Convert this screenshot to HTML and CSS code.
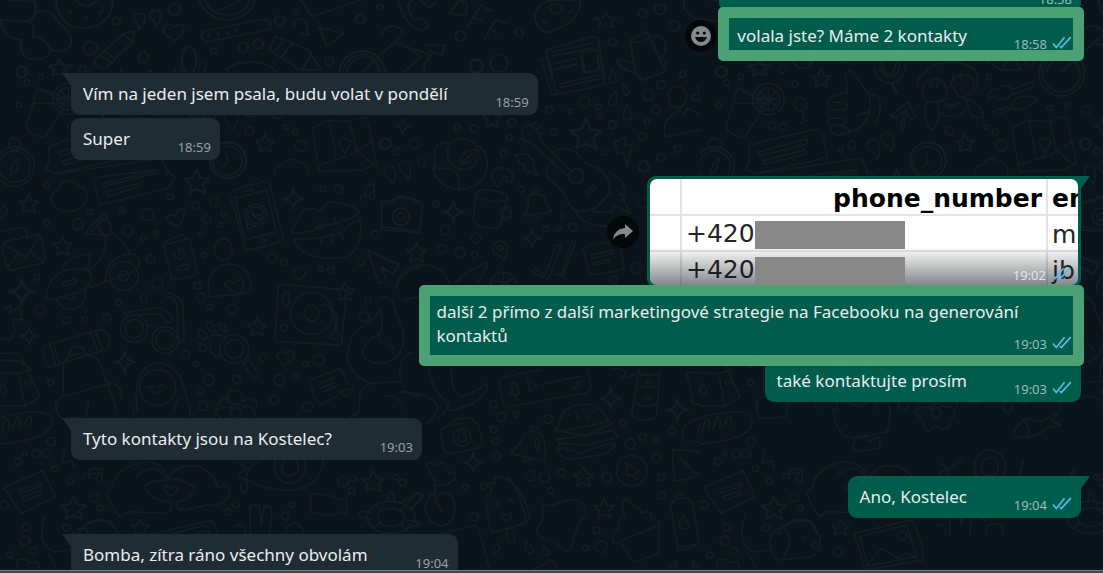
FILE: index.html
```html
<!DOCTYPE html>
<html lang="cs">
<head>
  <meta charset="UTF-8">
  <meta name="viewport" content="width=device-width, initial-scale=1.0">
  <title>Chat</title>
  <link rel="stylesheet" href="styles.css">
</head>
<body>
  <svg width="0" height="0" class="defs" aria-hidden="true">
    <symbol id="ticks" viewBox="0 0 20 13">
      <path d="M1 7.5 4.3 11.5 12.5 1.2M7.8 10 9.3 11.5 18.8 1.2" fill="none" stroke="#53bdeb" stroke-width="1.7"/>
    </symbol>
    <symbol id="star" viewBox="-16 -16 32 32" overflow="visible">
      <path d="M0-13 4-4 13-3 6 3 9 12 0 8-8 12-6 3-13-3-4-4Z"/>
    </symbol>
    <symbol id="spark" viewBox="-16 -16 32 32" overflow="visible">
      <path d="M0-11Q1-1 11 0 1 1 0 11-1 1-11 0-1-1 0-11Z"/>
    </symbol>
  </svg>

  <main class="chat">
    <!-- wallpaper -->
    <svg class="wallpaper" width="100%" height="100%" aria-hidden="true">
      <defs>
        <pattern id="doodles" width="700" height="573" patternUnits="userSpaceOnUse">
          <!-- top strip -->
          <g transform="scale(.459 .3333)">
            <path d="M0 60 60 64Q78 70 72 110 98 110 110 150 108 180 70 178 40 170 46 118 10 120 0 62M20 0 76 4Q85 50 60 64M76 38Q110 20 130 70 165 110 152 140 140 160 110 150"/>
            <path d="M122 0Q125 60 160 80 180 92 205 78 245 60 246 0M165 0Q185 35 212 0M182 50l10 6M150 30l6 12M225 30l-10 12"/>
            <path d="M205 180 270 100 292 92 290 125 230 205Q205 205 205 180M216 165 244 190M226 152 252 178M268 102 288 124"/>
            <path d="M292 60a12 16 0 1 1 24-8Q316 80 300 90 306 74 292 60M326 50a12 16 0 1 1 24-8Q350 75 336 82 342 66 326 50M380 122Q350 100 358 80 370 66 378 80 392 66 400 80 404 100 380 122"/>
            <path d="M434 0Q450 60 500 60 550 48 555 0M446 0Q460 46 500 46 540 36 544 0M480 30 525 0M442 94 578 56Q596 68 586 88L450 126Q432 116 442 94M455 100v10M475 97v10M495 93v10M515 88v10"/>
            <path d="M655 0 680 50 788 0M642 80a14 16 0 1 1 26-4L672 108 654 98M695 82 750 100 712 138ZM600 108 672 150 698 208 655 210 586 150ZM620 115 600 150M640 126 612 172M678 158 660 206"/>
            <path d="M740 215Q745 160 790 155 830 155 840 215M755 215Q765 175 790 170 820 175 825 215M860 125 790 215M872 130 918 170 880 215M834 100Q838 80 850 78 885 80 874 110L858 128M924 135 970 135 962 165 930 150M940 165 925 190 924 215M858 128 940 165M868 0Q880 80 920 92L935 78 920 55 905 58Q888 40 890 10L900 0M915 0 935 24 952 5"/>
            <path d="M980 40 1000 0Q1022 5 1015 25 1025 55 980 40M1020 78 1048 15 1072 35M1032 52 1050 62M1056 118 1080 58 1104 72M1068 88 1084 98"/>
            <path d="M1165 45Q1172 0 1215 0L1265 0Q1265 70 1190 98 1168 90 1165 45M1195 20Q1210 0 1225 20 1225 42 1205 40ZM1180 60l10 8M1240 40l8-10"/>
            <path d="M1190 150 1290 110Q1304 110 1305 125L1315 240M1190 150 1202 240M1205 155 1290 130M1205 168 1292 144M1210 190 1255 176M1210 208 1256 194M1266 160 1300 150 1306 210 1275 220ZM1176 180 1192 175"/>
            <path d="M1372 120 1410 95 1450 215 1400 240 1385 215ZM1375 125Q1395 135 1415 112M1418 110Q1440 100 1450 130 1452 165 1436 178M1385 215Q1345 215 1345 178L1378 190M1490 0Q1490 50 1525 60"/>
            <use href="#star" x="98" y="168" width="64" height="70"/><use href="#star" x="1290" y="25" width="60" height="70"/>
            <ellipse cx="380" cy="28" rx="13" ry="17"/><ellipse cx="254" cy="63" rx="8" ry="11"/><ellipse cx="196" cy="145" rx="15" ry="20"/><ellipse cx="312" cy="172" rx="11" ry="16"/><ellipse cx="610" cy="62" rx="11" ry="15"/><ellipse cx="530" cy="142" rx="11" ry="15"/><ellipse cx="563" cy="132" rx="10" ry="14"/><ellipse cx="785" cy="58" rx="10" ry="13"/><ellipse cx="828" cy="22" rx="7" ry="9"/><ellipse cx="1003" cy="108" rx="11" ry="15"/><ellipse cx="1131" cy="98" rx="9" ry="12"/><ellipse cx="1038" cy="200" rx="13" ry="22"/><ellipse cx="1087" cy="190" rx="19" ry="26"/><ellipse cx="1400" cy="40" rx="9" ry="13"/><ellipse cx="1438" cy="28" rx="12" ry="16"/><ellipse cx="1335" cy="125" rx="8" ry="11"/><ellipse cx="1470" cy="78" rx="11" ry="15"/><ellipse cx="48" cy="215" rx="12" ry="16"/><ellipse cx="412" cy="180" rx="16" ry="42"/><ellipse cx="718" cy="185" rx="9" ry="13"/><ellipse cx="465" cy="153" rx="7" ry="9"/><ellipse cx="645" cy="35" rx="6" ry="8"/>
          </g>
          <!-- drink, thumb, map -->
          <g transform="translate(-4 55) scale(.3333)">
            <path d="M125 98 90 215Q98 240 145 248L210 148ZM115 145 210 145M125 98 210 130"/>
            <circle cx="217" cy="132" r="47"/><circle cx="217" cy="132" r="34"/><path d="M217 98v68M183 132h68M193 108l48 48M241 108l-48 48"/>
            <path d="M455 110 448 60Q465 35 480 65L520 120Q535 190 480 225L430 240Q400 240 402 212 390 205 400 190 390 175 400 160 385 130 420 122ZM410 142h35q18 10 0 22h-42M402 190h38q20 10 0 20h-34M440 215q20 0 18 20M520 122Q555 115 552 150 555 195 532 202M485 180 522 168"/>
            <path d="M535 40Q540 80 585 85 630 75 630 20M552 35Q560 65 585 65 612 60 612 20M585 85 602 118M590 85 605 115M612 225 626 165 600 190 583 182 635 140 658 185 645 195 632 170 622 225Z"/>
            <path d="M690 45Q720 20 760 22 815 20 840 50 850 80 838 110M665 95Q665 60 695 50M680 95Q700 70 725 70 760 85 750 130 710 155 680 125ZM765 90Q770 60 795 60 835 60 835 95 820 130 790 125ZM700 100 710 78M720 100 728 78M780 85 770 62M800 80 790 58M690 145Q715 135 725 145 735 200 710 222 680 215 690 145M808 130Q860 145 862 185 845 195 825 180ZM730 172Q770 200 810 165M748 145Q768 155 790 142 770 170 748 150"/>
            <circle cx="1097" cy="55" r="68"/><circle cx="1097" cy="55" r="56"/><path d="M1100 50 1135 15M875 130Q880 100 905 102 930 80 948 105L1010 80Q1015 92 1008 98L945 118Q925 145 900 125ZM890 170 950 150Q960 120 985 125 1010 120 1025 135L990 158Q970 170 950 160L895 180Z"/>
            <path d="M948 222 995 195 1050 200 1112 185 1142 325 1100 345 970 350ZM1000 200 1020 300M1062 203 1085 300M970 330 1060 300 1130 260M1090 292 1130 330" stroke-dasharray="40 8"/><path d="M1047 295 1030 265Q1030 250 1047 250 1064 252 1064 265Z"/>
            <path d="M158 275Q165 265 350 225 372 222 378 235L395 305Q350 320 180 355L150 345 162 312ZM185 292 330 252Q340 260 330 268L195 302ZM200 318 325 285Q338 290 328 298L205 328ZM195 355 490 310Q510 318 512 360"/>
            <path d="M520 285a18 18 0 1 1 28-8Q558 300 540 312 546 300 520 285M562 265a18 18 0 1 1 28-8Q600 280 582 292 590 280 562 265"/>
            <circle cx="695" cy="317" r="54"/><circle cx="695" cy="317" r="43"/><path d="M688 290 698 318 680 338M835 360Q835 330 860 330 880 300 905 320 940 320 935 360"/>
            <circle cx="56" cy="335" r="59"/><circle cx="56" cy="335" r="47"/><circle cx="56" cy="267" r="18"/><path d="M70 308 62 345 42 362 50 328Z"/>
            <circle cx="314" cy="148" r="19"/><path d="M318 168 326 198M312 205 340 195"/>
            <use href="#star" x="155" y="5" width="65" height="65"/><use href="#star" x="340" y="35" width="70" height="70"/><use href="#star" x="772" y="230" width="70" height="70"/>
            <circle cx="75" cy="52" r="15"/><circle cx="93" cy="83" r="9"/><circle cx="134" cy="65" r="8"/><circle cx="260" cy="43" r="11"/><circle cx="297" cy="87" r="9"/><circle cx="228" cy="212" r="12"/><circle cx="262" cy="215" r="11"/><circle cx="68" cy="150" r="8"/><circle cx="468" cy="270" r="12"/><circle cx="433" cy="285" r="7"/><circle cx="761" cy="228" r="13"/><circle cx="898" cy="232" r="9"/><circle cx="870" cy="216" r="7"/><circle cx="915" cy="272" r="17"/><circle cx="1170" cy="166" r="12"/><circle cx="1114" cy="152" r="7"/><circle cx="1061" cy="160" r="7"/><circle cx="1166" cy="267" r="16"/><circle cx="880" cy="67" r="8"/>
          </g>
          <!-- scooter, phone, lips -->
          <g transform="translate(0 170) scale(.3333)">
            <path d="M155 95Q150 65 175 62 175 35 205 33 225 30 232 48 262 50 260 80 255 120 205 125 165 125 155 95"/>
            <path d="M0 185 65 172 80 185V200M5 230 15 215 110 195Q122 195 125 205L135 265 125 280 35 300Q25 300 20 290ZM12 222 75 262 118 200M55 250 22 292M90 245 130 275"/>
            <path d="M137 380Q150 300 220 298 270 290 275 320 280 350 230 368L150 390Q138 388 137 380M185 298Q210 250 270 255 270 290 250 300M265 300Q320 270 318 195L258 192Q260 180 315 128 325 130 320 142L275 185M335 185Q385 230 388 252 320 260 315 335L388 310Q420 300 418 275 415 250 388 252M270 352 315 335M188 340 225 325Q235 335 225 340L190 348Z"/>
            <ellipse cx="314" cy="170" rx="18" ry="28" transform="rotate(-30 314 170)"/><circle cx="371" cy="318" r="43"/><circle cx="371" cy="318" r="15"/><path d="M170 388Q180 418 215 418 258 410 256 358M195 380Q215 400 228 372"/>
            <path d="M490 225 570 205 592 310Q590 318 515 330ZM498 215 545 193 558 205M525 245Q515 262 540 268 560 262 550 240L538 238V252M528 292 565 282Q572 290 566 295L532 304Z"/>
            <path d="M688 70Q690 60 790 35 805 35 810 45L850 205Q845 220 750 240 738 238 735 230ZM705 85 800 60 830 185 735 210ZM735 65 760 58"/><circle cx="768" cy="135" r="33"/><circle cx="768" cy="135" r="24"/><circle cx="790" cy="212" r="7"/><path d="M757 122Q752 140 780 148L785 140 775 132 768 138 760 130M742 150V178L765 168"/>
            <path d="M872 190Q895 140 910 120 940 110 962 125 980 90 1010 98 1070 110 1080 125 1060 150 980 165 940 190 872 190M880 205Q950 215 1030 185 1060 150 1080 150 1090 220 1050 255 1000 275 930 255 885 235 880 205M945 180Q965 155 985 165L1020 158M960 222 968 205M995 220V205M1030 208 1022 195M955 158 965 172M1005 142V160"/>
            <path d="M630 380Q615 320 650 295 690 270 730 295 760 325 750 365 730 370 715 375 675 350 675 340 685 325 702 340 715 320 732 335 732 360 708 378L690 375Z"/><ellipse cx="670" cy="238" rx="27" ry="32"/>
            <path d="M1103 242 1197 282 1180 312 1145 290 1158 330 1138 340ZM835 350Q838 343 850 343L1040 360 1025 520 1015 525 832 515 825 505ZM965 408Q980 395 990 415L1012 438V485M1005 430V485"/><circle cx="935" cy="430" r="63"/><circle cx="935" cy="430" r="23"/><circle cx="1006" cy="495" r="12"/><ellipse cx="858" cy="388" rx="10" ry="22"/><circle cx="852" cy="473" r="10"/>
            <path d="M370 430 470 412Q500 415 518 445 515 460 500 458L480 430 385 438ZM500 368Q545 375 550 410L552 510 540 520 530 500M498 380Q530 380 532 415V485M440 465 470 470"/><circle cx="402" cy="476" r="41"/><circle cx="402" cy="476" r="28"/><circle cx="496" cy="510" r="40"/><circle cx="496" cy="510" r="28"/>
            <circle cx="703" cy="537" r="43"/><circle cx="703" cy="537" r="28"/><path d="M730 580 745 568 775 610Q775 625 758 625ZM630 500Q655 490 678 500M630 500Q620 560 662 560M595 480Q618 480 620 505 600 520 595 480M620 460Q640 450 645 485 625 490 620 460M655 460Q680 460 680 485 662 490 655 460M595 520Q625 520 618 545 595 550 595 520"/>
            <path d="M130 540Q128 530 140 525L295 480Q320 475 330 510 330 530 318 538L150 592Q138 592 130 540M150 525 168 588M160 522 180 584M272 488 295 545M285 484 308 540M190 680V590Q190 555 235 552 285 550 300 580L350 720M190 680 330 640Q365 640 365 690M170 720 175 690 190 680M208 560Q208 530 232 528 258 532 256 552"/>
            <path d="M0 550H60L120 680 75 708H0M0 570 62 575 95 600 55 610H0M55 610 75 708M75 635 98 625 98 635 78 645ZM8 640Q-5 660 10 675 30 668 8 640M10 418 32 405 30 430 58 410 68 450 40 448 45 480 30 510 0 505"/>
            <path d="M412 720Q405 660 412 640 430 580 480 578 530 585 548 640L570 720M410 720V705M525 720Q525 680 550 685"/><circle cx="473" cy="653" r="54"/><path d="M442 655Q450 645 460 652M478 648Q488 640 494 650M455 662Q470 680 482 662M650 715Q670 665 690 700 670 660 705 662 735 668 725 695 775 670 770 715"/>
            <path d="M928 630 1020 595Q1030 600 1040 640M928 630 945 690 968 705 980 695 1010 680M960 640 1002 622M963 655 1005 638M968 666 1008 650M1018 665 1062 655 1040 680ZM850 585Q825 560 835 548 850 540 858 555 870 535 882 550 890 570 850 585M535 170Q495 155 500 140 520 130 525 140 530 115 550 118 562 140 535 170"/>
            <path d="M1145 380Q1180 380 1185 420L1210 480Q1220 580 1130 580 1080 570 1090 540 1110 500 1140 490 1155 445 1140 420 1120 450 1060 490 1040 540 1042 570 1060 620 1110 640L1202 635M1140 490Q1130 510 1150 520 1170 520 1182 540M1190 350Q1200 310 1260 290M1210 390 1260 378M1080 720Q1070 640 1120 640M1202 635Q1190 560 1240 545M1210 660Q1240 680 1260 680M1150 680Q1200 670 1210 720M1285 18"/>
            <path d="M280 30Q275 20 470 0M280 30 300 105 500 55 525 22 500 0M308 42 470 0M310 50 475 8M320 65 420 40Q430 45 420 50L325 78ZM1145 95 1185 88 1195 78 1230 82 1260 95M1145 95V180L1260 188"/><circle cx="1202" cy="140" r="25"/><circle cx="1202" cy="140" r="11"/><circle cx="686" cy="-30" r="54"/><path d="M1090 92a8 8 0 1 1 8-8V48L1122 40V75a8 8 0 1 1-8-5M5 108Q30 115 20 130L0 145M0 115 8 122"/>
            <use href="#star" x="50" y="65" width="72" height="72"/><use href="#star" x="152" y="192" width="72" height="72"/><use href="#star" x="545" y="-10" width="90" height="90"/><use href="#star" x="1000" y="330" width="70" height="70"/><use href="#star" x="735" y="435" width="72" height="72"/><use href="#spark" x="10" y="310" width="110" height="110"/><use href="#spark" x="48" y="458" width="80" height="80"/><use href="#spark" x="328" y="530" width="92" height="92"/><use href="#spark" x="835" y="42" width="90" height="90"/>
            <circle cx="233" cy="163" r="17"/><circle cx="271" cy="125" r="8"/><circle cx="367" cy="121" r="8"/><circle cx="442" cy="134" r="18"/><circle cx="382" cy="182" r="16"/><circle cx="430" cy="204" r="8"/><circle cx="468" cy="191" r="7"/><circle cx="512" cy="80" r="9"/><circle cx="588" cy="106" r="12"/><circle cx="643" cy="96" r="13"/><circle cx="621" cy="148" r="12"/><circle cx="671" cy="132" r="8"/><circle cx="661" cy="164" r="7"/><circle cx="602" cy="192" r="7"/><circle cx="612" cy="255" r="8"/><circle cx="451" cy="268" r="13"/><circle cx="472" cy="339" r="16"/><circle cx="592" cy="348" r="10"/><circle cx="603" cy="382" r="13"/><circle cx="631" cy="412" r="8"/><circle cx="696" cy="417" r="14"/><circle cx="816" cy="264" r="14"/><circle cx="852" cy="277" r="10"/><circle cx="898" cy="310" r="17"/><circle cx="961" cy="296" r="8"/><circle cx="993" cy="301" r="10"/><circle cx="1016" cy="57" r="13"/><circle cx="969" cy="56" r="9"/><circle cx="1125" cy="194" r="11"/><circle cx="1084" cy="276" r="10"/><circle cx="1104" cy="394" r="9"/><circle cx="1093" cy="440" r="14"/><circle cx="120" cy="420" r="16"/><circle cx="110" cy="322" r="9"/><circle cx="140" cy="158" r="8"/><circle cx="140" cy="45" r="8"/><circle cx="320" cy="445" r="13"/><circle cx="255" cy="448" r="9"/><circle cx="200" cy="451" r="10"/><circle cx="431" cy="386" r="10"/><circle cx="356" cy="397" r="9"/><circle cx="557" cy="554" r="12"/><circle cx="587" cy="582" r="8"/><circle cx="627" cy="631" r="16"/><circle cx="710" cy="628" r="12"/><circle cx="789" cy="561" r="11"/><circle cx="837" cy="631" r="16"/><circle cx="956" cy="570" r="16"/><circle cx="917" cy="582" r="8"/><circle cx="823" cy="690" r="13"/><circle cx="600" cy="661" r="9"/><circle cx="152" cy="637" r="9"/><circle cx="887" cy="619" r="9"/>
          </g>
          <!-- newspaper, drops, person -->
          <g transform="translate(420 60) scale(.3333)">
            <path d="M365 0 395 105Q540 80 555 70L545 0M388 0 408 98M400 30 470 12M418 72 540 45 542 55 422 82ZM485 0 490 38 535 30 535 0M590 5Q620 30 650 45L665 62 735 35 738 0M580 30Q565 50 568 65 585 75 590 60ZM610 68Q605 90 615 105 635 105 625 90ZM588 92Q565 115 566 130 580 145 590 132ZM622 135Q605 160 612 178 635 185 637 165ZM735 230Q725 180 765 160L778 150 795 165 800 145Q850 160 860 200L850 208ZM840 78 850 100 872 95 875 108 852 115 855 138 842 140 838 118 818 122 815 108 838 103 832 82Z"/>
            <ellipse cx="772" cy="111" rx="28" ry="32"/><circle cx="493" cy="126" r="16"/><circle cx="685" cy="104" r="17"/><circle cx="723" cy="74" r="12"/><circle cx="708" cy="148" r="13"/><circle cx="578" cy="195" r="12"/><circle cx="535" cy="140" r="8"/><circle cx="540" cy="167" r="8"/><circle cx="682" cy="186" r="8"/><circle cx="668" cy="230" r="11"/><circle cx="722" cy="293" r="12"/><circle cx="773" cy="267" r="10"/><circle cx="388" cy="149" r="10"/><circle cx="450" cy="154" r="7"/><circle cx="401" cy="216" r="10"/><circle cx="275" cy="188" r="12"/><circle cx="671" cy="320" r="17"/><circle cx="788" cy="43" r="9"/><circle cx="170" cy="18" r="19"/>
          </g>
          <!-- guitar, mug, bell -->
          <g transform="translate(380 110) scale(.3333)">
            <path d="M445 42Q480 60 482 92L578 185M465 108 565 200M445 42Q420 55 427 85L465 108M455 45 468 38M470 58 482 50M478 72 492 66M425 85 415 95M435 95 428 105M530 120Q570 105 595 135 610 160 650 172 690 195 688 240 670 300 600 305 570 300 560 265 540 230 505 205 490 175 520 150M618 245 640 225Q650 230 645 236L625 255ZM585 305Q610 350 680 348M690 190Q735 200 738 260L720 250 752 310 700 285 698 305 640 305 690 245"/><circle cx="589" cy="198" r="22"/>
            <path d="M165 175V115Q175 95 205 98M298 108Q325 135 322 170 310 235 240 238 180 240 158 175 190 170 225 185 245 210 235 235M240 162Q240 120 288 120 285 160 240 162M245 158 280 128"/><circle cx="249" cy="132" r="47"/>
            <path d="M290 248 280 325Q285 355 335 355 360 355 362 340L382 262M362 295Q395 280 395 315 390 335 362 328"/><ellipse cx="335" cy="257" rx="48" ry="16" transform="rotate(8 335 257)"/><circle cx="376" cy="310" r="13"/>
            <path d="M432 318Q448 295 445 262 465 240 492 260 495 285 517 305ZM458 245a9 9 0 1 1 18-2M465 320Q475 330 485 317M336 200Q330 175 370 172 400 180 400 205 395 220 380 215 385 200 370 200 365 220 350 232ZM405 135 440 130 466 160 458 165 472 198 430 178 436 166 422 162ZM705 95 738 80 735 105 757 105 742 168 730 130 710 130Z"/>
            <path d="M15 195a17 17 0 1 1 30-5Q48 215 35 225 40 210 15 195M60 180a17 17 0 1 1 30-5Q94 200 80 210 86 196 60 180M5 280 45 275 55 262 98 268 128 285 118 365 5 350Z"/><circle cx="63" cy="320" r="26"/><circle cx="63" cy="320" r="11"/>
            <path d="M375 450 340 425Q335 395 362 393 385 400 383 420ZM455 485 465 475 495 495 530 405 543 408 505 510ZM525 490 545 495 575 395 587 398 548 500ZM610 415Q612 408 710 392 720 395 732 472 725 485 628 495ZM632 435 700 420 702 430 635 445ZM640 458 690 448 690 456 642 466ZM50 540Q50 465 135 463 200 468 215 540M0 440 57 465 40 492 0 475M225 520Q260 480 320 458 325 470 290 520M330 540Q330 490 370 486 410 490 415 540M370 486V540M340 510 405 530M400 505 340 535"/><circle cx="362" cy="414" r="8"/>
            <use href="#star" x="560" y="15" width="115" height="115"/><use href="#star" x="302" y="-10" width="70" height="70"/><use href="#star" x="72" y="390" width="75" height="75"/><use href="#spark" x="32" y="12" width="72" height="72"/><use href="#spark" x="175" y="260" width="92" height="92"/><use href="#spark" x="415" y="345" width="82" height="82"/>
            <circle cx="18" cy="101" r="16"/><circle cx="103" cy="101" r="15"/><circle cx="51" cy="124" r="10"/><circle cx="126" cy="157" r="12"/><circle cx="232" cy="53" r="9"/><circle cx="283" cy="56" r="11"/><circle cx="396" cy="38" r="12"/><circle cx="388" cy="83" r="9"/><circle cx="371" cy="131" r="9"/><circle cx="423" cy="238" r="10"/><circle cx="195" cy="360" r="14"/><circle cx="287" cy="384" r="15"/><circle cx="186" cy="417" r="13"/><circle cx="240" cy="428" r="16"/><circle cx="284" cy="435" r="9"/><circle cx="578" cy="352" r="12"/><circle cx="536" cy="356" r="7"/><circle cx="499" cy="356" r="8"/><circle cx="549" cy="318" r="8"/><circle cx="697" cy="44" r="12"/><circle cx="675" cy="127" r="9"/><circle cx="790" cy="168" r="15"/><circle cx="788" cy="278" r="15"/><circle cx="769" cy="475" r="17"/><circle cx="699" cy="510" r="12"/><circle cx="167" cy="282" r="9"/>
          </g>
          <!-- burger, ice lolly, cupcake -->
          <g transform="translate(400 360) scale(.3333)">
            <path d="M475 200Q480 135 560 132 610 140 625 185L480 215 465 210ZM480 215 560 225 640 190 622 182M468 240 640 212 655 232 560 255 480 250ZM480 250 470 268 490 262 505 275 520 268 540 282 590 262 640 250 650 262M472 268Q480 298 520 297L600 285Q640 275 642 252M510 160l-5 8M530 175l4-8M548 150l6 8M580 150l6 8M562 175l6-4"/>
            <path d="M297 60Q300 50 420 30M297 60 310 130Q315 142 330 140L560 98Q575 92 573 80L562 20M335 72Q342 62 350 72L355 98Q345 108 338 98ZM328 95Q345 120 362 95M348 112 352 120M382 60 412 78 390 95ZM430 72 543 48M512 80 520 90 535 65M525 85 532 88 546 65M635 25Q700 25 660 60L725 35M720 20 695 160Q700 180 730 180 768 180 770 165L780 20M722 45H775M715 82H772M706 130Q740 145 770 130M740 75V65H755V75M735 120V110H750V120"/>
            <path d="M860 38 950 35 975 125 965 135 880 132ZM950 35 990 20 1015 95 975 125M970 65 995 52V60L972 78ZM908 65Q890 85 900 105 925 108 908 65M850 235Q835 190 900 175L990 155 1020 155M850 235Q860 255 1020 240M895 210 905 170Q920 168 915 205M935 200 945 165Q958 165 955 195M972 190 985 158"/>
            <path d="M122 215Q120 205 155 195L165 178 210 172 222 185Q240 190 247 255 240 268 145 280 135 278 130 265ZM165 195 190 188"/><circle cx="186" cy="233" r="26"/><circle cx="186" cy="233" r="12"/>
            <path d="M333 280Q370 240 372 220 395 205 425 225 438 240 435 305ZM395 210a10 10 0 1 1 20 0M368 295Q378 312 395 300M405 238 418 235Q420 260 408 270Z"/><circle cx="695" cy="332" r="46"/><path d="M680 310 717 335 705 340 715 355 705 360 695 345 680 348ZM818 268 870 272Q925 280 910 310 900 360 825 362 815 320 818 268M838 290 908 362M850 325 870 318M845 305 865 310M905 378 940 440 960 458 1020 440M905 378 1020 335"/>
            <path d="M102 355Q75 320 80 310 95 305 105 318 115 310 130 308 150 330 143 340 170 335 168 350 150 380 105 375ZM105 375V420L125 455M100 400Q70 420 78 460 95 500 125 498 165 490 165 440 160 395 125 400 110 405 105 420M285 350Q360 350 390 470 395 490 280 517 265 510 258 410L275 398 268 370 285 368ZM320 352Q350 360 380 490M285 425 298 430 285 440M335 412 325 420 340 426M302 462Q330 468 335 455 338 480 320 482 308 478 302 462M318 515 325 545Q340 558 345 540L340 508"/>
            <path d="M425 430Q450 445 495 422 560 410 558 465 530 490 520 540 510 585 490 570 470 540 430 535 400 520 415 500 440 470 425 430M640 550Q635 515 655 505 650 480 675 465 655 440 680 412L700 440Q730 445 720 460 760 445 752 475 780 475 778 495L645 550ZM665 550 695 600 712 605 775 580 778 495M812 435Q820 415 850 412 880 420 880 440L897 550Q870 570 835 572L812 435M825 415a12 12 0 1 1 28 0M850 468Q830 490 842 505 875 512 865 490ZM838 562 892 552M0 430 45 400Q65 395 70 410L30 450M20 480 60 490Q60 500 20 500M120 520 225 497Q240 500 268 630M290 550Q275 570 285 580 300 575 300 560ZM380 545Q370 570 385 580 400 580 402 570ZM428 558Q425 580 440 588 450 580 445 572ZM400 630 455 600Q470 610 470 630M805 630 828 598V630M880 630V600L900 630"/>
            <path d="M0 95Q110 100 115 150 105 165 80 192M80 0Q90 90 145 130 140 160 120 170M155 20Q150 90 180 110 225 100 265 68 260 130 150 152"/>
            <use href="#spark" x="585" y="68" width="95" height="95"/><use href="#spark" x="785" y="102" width="95" height="95"/><use href="#spark" x="177" y="262" width="85" height="92"/><use href="#star" x="512" y="312" width="76" height="76"/><use href="#star" x="575" y="408" width="74" height="74"/>
            <circle cx="303" cy="171" r="14"/><circle cx="348" cy="163" r="8"/><circle cx="280" cy="133" r="11"/><circle cx="281" cy="210" r="9"/><circle cx="287" cy="243" r="10"/><circle cx="289" cy="289" r="12"/><circle cx="445" cy="178" r="13"/><circle cx="391" cy="348" r="14"/><circle cx="434" cy="351" r="16"/><circle cx="484" cy="338" r="11"/><circle cx="453" cy="392" r="9"/><circle cx="620" cy="351" r="15"/><circle cx="690" cy="252" r="15"/><circle cx="669" cy="188" r="9"/><circle cx="728" cy="231" r="10"/><circle cx="767" cy="240" r="8"/><circle cx="770" cy="292" r="13"/><circle cx="783" cy="352" r="10"/><circle cx="783" cy="406" r="11"/><circle cx="816" cy="213" r="11"/><circle cx="222" cy="470" r="13"/><circle cx="251" cy="378" r="9"/><circle cx="197" cy="382" r="8"/><circle cx="603" cy="560" r="17"/><circle cx="590" cy="511" r="10"/><circle cx="557" cy="563" r="8"/>
          </g>
          <!-- bread, hands, turtle -->
          <g transform="translate(0 400) scale(.357 .3333)">
            <path d="M0 55Q10 45 100 35 155 40 145 75 130 120 0 132M5 100 15 60Q30 50 25 90M35 90 48 52Q60 50 55 85M65 80 80 48Q92 50 85 75M155 0Q160 60 180 55L240 50 250 0M180 150 175 190 200 182 208 205"/>
            <path d="M10 262 120 212 155 290 60 340 25 285ZM55 270 115 250 118 258 58 280ZM65 290 112 272 115 282 68 303ZM235 235a8 10 0 1 1 14 0V208L285 205V235a8 10 0 1 1-12-5L278 218 250 222"/>
            <path d="M335 350Q300 300 300 275 320 260 320 240 350 190 410 185 460 190 470 235M380 232Q400 205 440 205L475 240Q420 240 405 260 420 300 475 305 490 330 465 340L360 335 335 350M470 235Q500 185 560 200 610 235 610 265 640 240 645 280 630 320 580 315L520 330Q490 330 495 305 540 295 545 265 520 235 470 235M478 288Q450 265 465 258 475 255 478 265 490 255 497 268 490 285 478 288"/>
            <path d="M690 235Q690 200 735 180M905 180Q900 270 800 270 720 265 690 235M668 190Q690 195 690 210L670 220 665 230 690 240Q700 275 680 278L672 250"/><ellipse cx="812" cy="200" rx="44" ry="50"/><ellipse cx="812" cy="200" rx="24" ry="28"/>
            <path d="M870 285Q880 278 935 290L945 300 970 295 972 345 945 335 935 348 870 338ZM700 405 700 320Q720 305 728 325L732 375 740 320Q760 310 762 335L755 405M660 380Q680 360 690 400M800 405Q800 370 830 370 850 380 850 405"/>
            <ellipse cx="1095" cy="352" rx="67" ry="48"/><ellipse cx="1095" cy="352" rx="37" ry="28"/><path d="M1035 355Q1000 355 1008 335 1020 330 1040 340M1085 305 1092 275Q1105 275 1105 305M1140 310 1170 280Q1195 280 1155 325M1155 360Q1180 370 1170 380 1155 380 1145 372M1070 330 1052 318M1120 328 1142 318M1065 370 1045 385M1125 375 1140 395"/>
            <path d="M125 350Q100 430 150 455 180 455 200 448M220 402Q230 365 290 362 320 370 330 402M135 460 155 500M50 505Q40 480 60 478 80 475 82 490 110 475 110 505"/>
            <use href="#star" x="162" y="280" width="88" height="88"/><use href="#star" x="362" y="350" width="62" height="65"/><use href="#star" x="1005" y="202" width="80" height="84"/>
            <circle cx="143" cy="125" r="12"/><circle cx="101" cy="161" r="12"/><circle cx="130" cy="160" r="12"/><circle cx="50" cy="185" r="11"/><circle cx="69" cy="161" r="7"/><circle cx="155" cy="206" r="9"/><circle cx="195" cy="243" r="9"/><circle cx="264" cy="293" r="12"/><circle cx="281" cy="323" r="8"/><circle cx="10" cy="315" r="12"/><circle cx="75" cy="381" r="11"/><circle cx="70" cy="422" r="14"/><circle cx="95" cy="452" r="10"/><circle cx="27" cy="465" r="9"/><circle cx="186" cy="383" r="10"/><circle cx="662" cy="314" r="9"/><circle cx="640" cy="335" r="9"/><circle cx="800" cy="348" r="12"/><circle cx="818" cy="314" r="8"/><circle cx="961" cy="245" r="15"/><circle cx="991" cy="237" r="8"/><circle cx="985" cy="273" r="9"/><circle cx="1128" cy="247" r="10"/><circle cx="1109" cy="232" r="8"/><circle cx="569" cy="17" r="14"/><circle cx="862" cy="20" r="14"/>
          </g>
          <!-- flower, picture frame -->
          <g transform="translate(-140 400) scale(.3464 .3333)">
            <path d="M790 20Q785 60 820 110L860 115 945 95 955 20M845 140 855 110 885 105 890 125 920 110 925 145 850 155ZM1025 40Q1035 15 1070 25 1080 0 1110 20 1140 15 1140 45 1120 60 1125 80 1100 95 1085 75 1065 105 1050 85 1055 60 1025 40M850 400 1015 360Q1050 420 1048 480L880 510ZM865 410 1000 375 1030 470 890 498ZM885 495 930 445 975 475 1000 460 1030 475M1310 110Q1310 80 1345 55L1390 65 1440 35 1420 65 1447 75 1405 85Q1370 120 1310 110M1340 60Q1360 85 1350 110"/><circle cx="1085" cy="38" r="14"/><circle cx="988" cy="407" r="13"/>
            <path d="M605 430Q610 380 650 385 680 420 640 480 615 485 605 430M650 375Q680 350 725 365L750 410 750 450 725 470 645 480M700 412h8M728 432q15-10 15 0t-10 12q-15-10 0-12"/><circle cx="803" cy="455" r="13"/>
          </g>
        </pattern>
      </defs>
      <rect class="paper" width="100%" height="100%" fill="url(#doodles)"/>
    </svg>

    <div class="messages">
      <div class="row out follow">
        <div class="bubble wide"><p class="text">&nbsp;</p><span class="meta">18:58</span></div>
      </div>

      <div class="row out">
        <button class="round" type="button" aria-label="Reagovat">
          <svg width="20" height="20" viewBox="0 0 20 20">
            <circle cx="10" cy="10" r="10" fill="#85898c"/>
            <circle cx="6.7" cy="7" r="1.6" fill="#05090c"/>
            <circle cx="13.3" cy="7" r="1.6" fill="#05090c"/>
            <path d="M4 11h12q-1.500 5-6 5t-6-5Z" fill="#05090c"/>
          </svg>
        </button>
        <div class="bubble marked">
          <p class="text">volala jste? Máme 2 kontakty<span class="space"></span></p>
          <span class="meta">18:58 <svg class="ticks"><use href="#ticks"/></svg></span>
        </div>
      </div>

      <div class="row in follow">
        <div class="bubble tail">
          <p class="text">Vím na jeden jsem psala, budu volat v pondělí<span class="space"></span></p>
          <span class="meta">18:59</span>
        </div>
      </div>

      <div class="row in">
        <div class="bubble">
          <p class="text">Super<span class="space"></span></p>
          <span class="meta">18:59</span>
        </div>
      </div>

      <div class="row out follow">
        <button class="round" type="button" aria-label="Přeposlat">
          <svg width="20" height="18" viewBox="0 0 20 18">
            <path d="M12 1 20 8 12 15V11Q4 10.500 0 16.500 1 6 12 5Z" fill="#85898c"/>
          </svg>
        </button>
        <div class="bubble photo tail">
          <div class="picture">
            <table>
              <tr><th></th><th>phone_number</th><th>em</th></tr>
              <tr><td></td><td>+420<span class="hidden-number"></span></td><td>m</td></tr>
              <tr><td></td><td>+420<span class="hidden-number"></span></td><td>jb</td></tr>
            </table>
          </div>
          <span class="meta">19:02 <svg class="ticks"><use href="#ticks"/></svg></span>
        </div>
      </div>

      <div class="row out follow">
        <div class="bubble marked tall">
          <p class="text">další 2 přímo z další marketingové strategie na Facebooku na generování kontaktů<span class="space"></span></p>
          <span class="meta">19:03 <svg class="ticks"><use href="#ticks"/></svg></span>
        </div>
      </div>

      <div class="row out">
        <div class="bubble">
          <p class="text">také kontaktujte prosím<span class="space"></span></p>
          <span class="meta">19:03 <svg class="ticks"><use href="#ticks"/></svg></span>
        </div>
      </div>

      <div class="row in">
        <div class="bubble tail">
          <p class="text">Tyto kontakty jsou na Kostelec?<span class="space"></span></p>
          <span class="meta">19:03</span>
        </div>
      </div>

      <div class="row out">
        <div class="bubble tail">
          <p class="text">Ano, Kostelec<span class="space"></span></p>
          <span class="meta">19:04 <svg class="ticks"><use href="#ticks"/></svg></span>
        </div>
      </div>

      <div class="row in">
        <div class="bubble tail">
          <p class="text">Bomba, zítra ráno všechny obvolám<span class="space"></span></p>
          <span class="meta">19:04</span>
        </div>
      </div>
    </div>
  </main>
  <footer class="edge"></footer>
</body>
</html>
```

FILE: styles.css
```css
* {
  box-sizing: border-box;
}

body {
  margin: 0;
  height: 100vh;
  display: flex;
  flex-direction: column;
  background-color: #0b141a;
  color: #e9edef;
  font-family: "Segoe UI", "Noto Sans", "Open Sans", sans-serif;
  font-size: 17px;
  line-height: 24px;
}

.defs {
  position: absolute;
}

.chat {
  position: relative;
  flex: 1;
  min-height: 0;
  overflow: hidden;
}

.wallpaper {
  position: absolute;
  inset: 0;
  fill: none;
  stroke: #141d24;
  stroke-width: 4;
  stroke-linejoin: round;
  stroke-linecap: round;
}

.wallpaper use {
  stroke-width: 2;
}

.wallpaper .paper {
  stroke: none;
}

/* the list is scrolled, its first bubble is cut by the top edge */
.messages {
  position: relative;
  margin-top: -30px;
  padding: 0 22px 0 71px;
}

.row {
  display: flex;
  align-items: center;
  gap: 8px;
  margin-bottom: 16px;
}

.row.follow {
  margin-bottom: 3px;
}

.row.out {
  justify-content: flex-end;
}

.bubble {
  position: relative;
  max-width: 65%;
  padding: 9px 9px 9px 12px;
  border-radius: 9px;
  background-color: #202c33;
}

.out .bubble {
  background-color: #005c4b;
}

.wide {
  width: 362px;
}

.text {
  margin: 0;
}

.space {
  display: inline-block;
  width: 81px;
}

.out .space {
  width: 105px;
}

.meta {
  position: absolute;
  right: 9px;
  bottom: 5px;
  display: flex;
  align-items: flex-start;
  gap: 5px;
  font-size: 13px;
  line-height: 16px;
  color: #9aa1a6;
}

.out .meta {
  color: #99beb7;
}

.ticks {
  width: 20px;
  height: 13px;
}

/* bubble tails */
.tail::before {
  content: "";
  position: absolute;
  top: 0;
  width: 10px;
  height: 14px;
  background-color: inherit;
}

.in .tail {
  border-top-left-radius: 0;
}

.in .tail::before {
  left: -9px;
  clip-path: polygon(0 0, 100% 0, 100% 100%);
}

.out .tail {
  border-top-right-radius: 0;
}

.out .tail::before {
  right: -9px;
  clip-path: polygon(0 0, 100% 0, 0 100%);
}

/* green frame over important messages */
.marked {
  z-index: 1;
}

.marked::after {
  content: "";
  position: absolute;
  inset: -8px -3px -4px -7px;
  border: 11px solid #4ba173;
  border-radius: 5px;
}

.marked.tall::after {
  inset: -6px -3px -9px -6px;
}

.round {
  display: flex;
  align-items: center;
  justify-content: center;
  width: 32px;
  height: 32px;
  padding: 0;
  border: none;
  border-radius: 50%;
  background-color: #04080b;
  cursor: pointer;
}

/* photo of the contact sheet */
.photo {
  width: 434px;
  padding: 3px;
}

.picture {
  position: relative;
  height: 106px;
  overflow: hidden;
  border-radius: 7px;
  background-color: #ffffff;
  color: #262626;
  font-family: "DejaVu Sans", Verdana, sans-serif;
  font-size: 25px;
}

.picture::after {
  content: "";
  position: absolute;
  inset: auto 0 0;
  height: 38px;
  background: linear-gradient(rgba(11, 20, 26, 0), rgba(11, 20, 26, 0.5));
}

.picture table {
  width: 480px;
  table-layout: fixed;
  border-collapse: collapse;
}

.picture th,
.picture td {
  height: 36px;
  padding: 4px 4px 0;
  border-right: 2px solid #e4e4e4;
  border-bottom: 2px solid #e4e4e4;
  text-align: left;
  white-space: nowrap;
}

.picture th {
  color: #000000;
}

.picture th:first-child {
  width: 31px;
}

.picture th:nth-child(2) {
  width: 366px;
  text-align: right;
}

.hidden-number {
  position: relative;
  z-index: 1;
  display: inline-block;
  width: 150px;
  height: 28px;
  vertical-align: middle;
  background-color: #878787;
}

.photo .meta {
  z-index: 2;
  right: 10px;
  color: #e3e5e6;
}

.edge {
  height: 3px;
  border-top: 1px solid #7a7a7a;
  background-color: #434343;
}
```
